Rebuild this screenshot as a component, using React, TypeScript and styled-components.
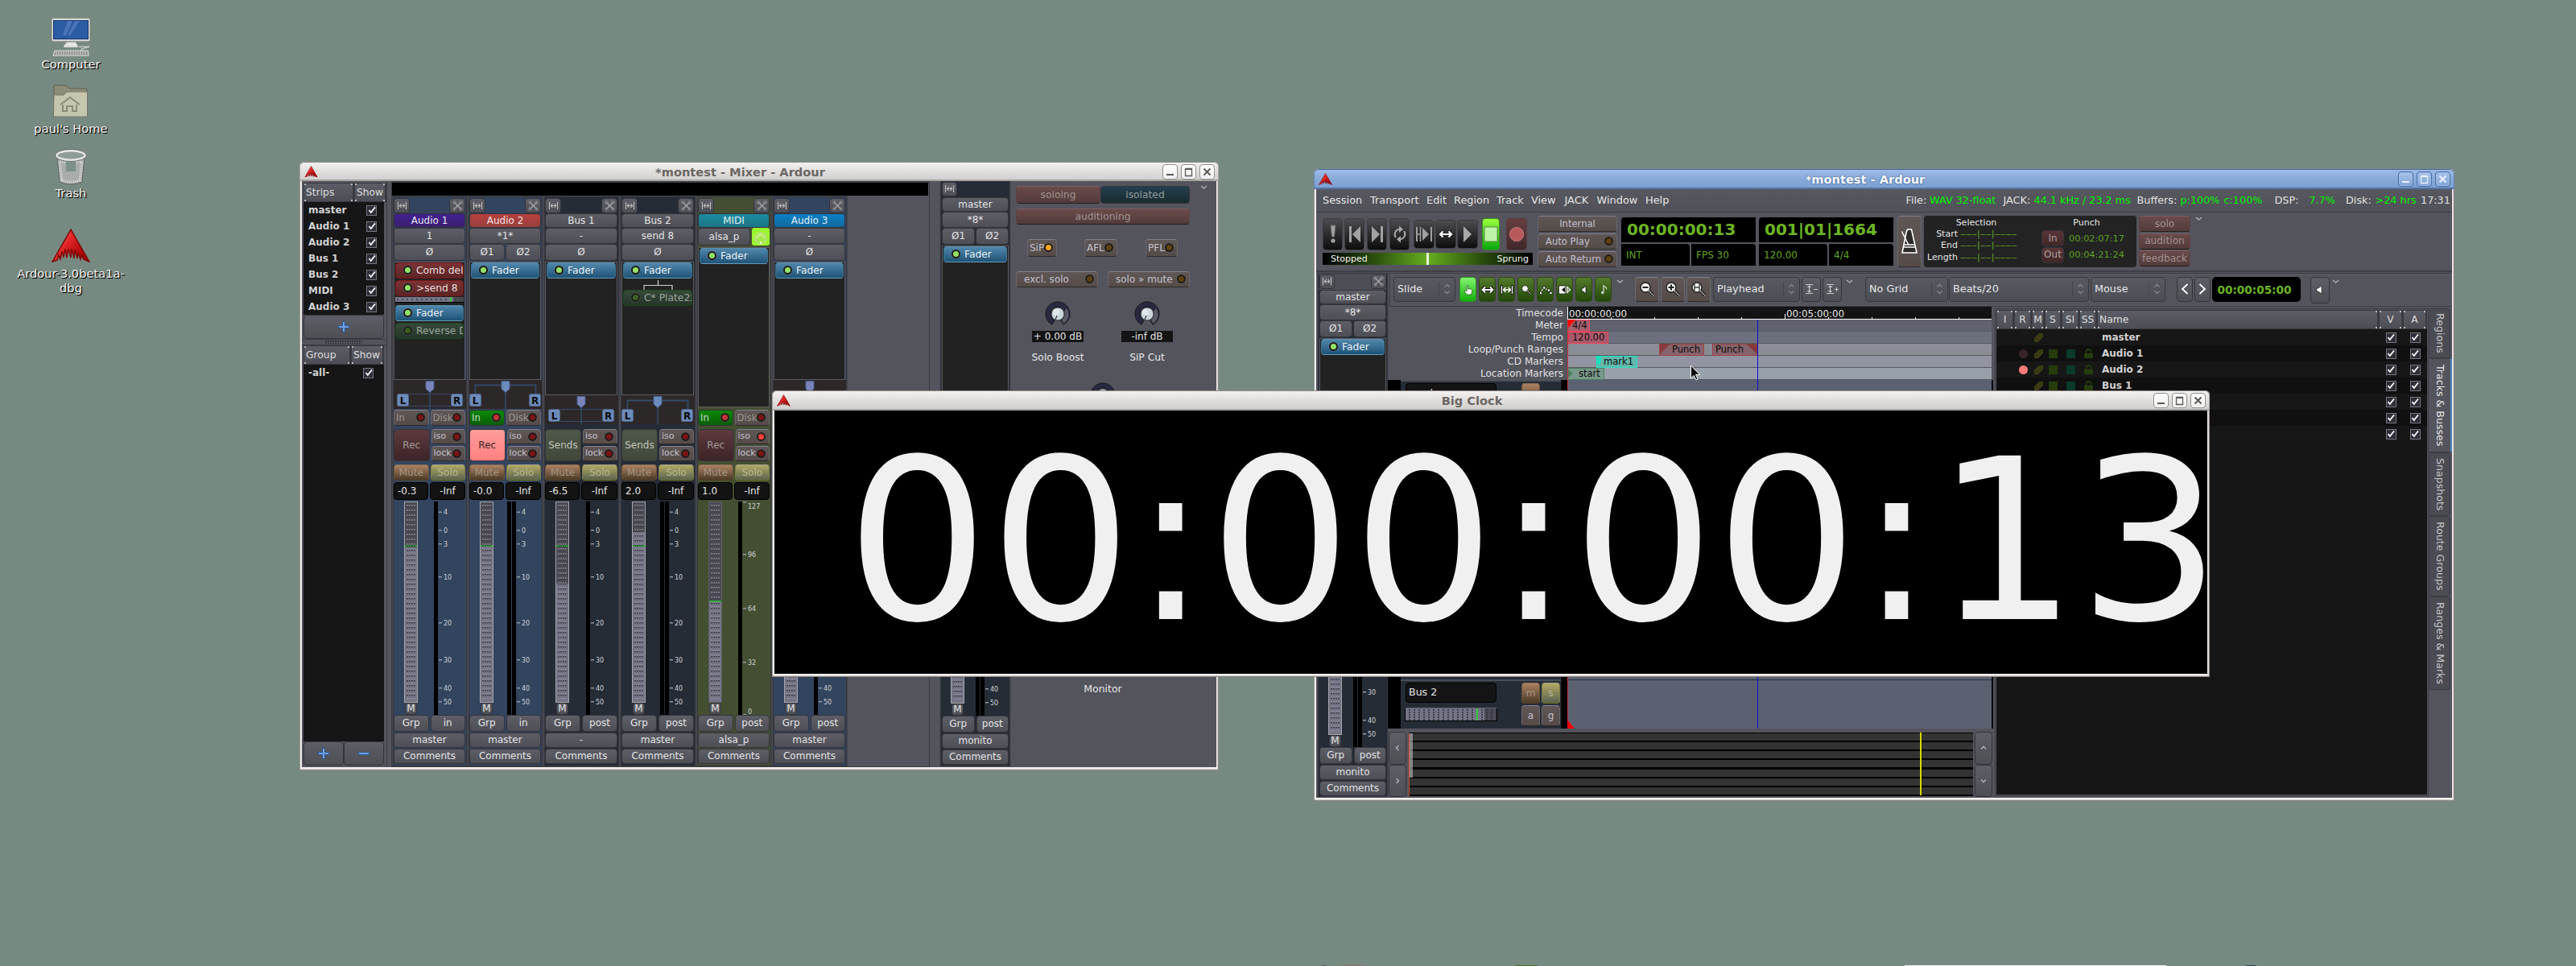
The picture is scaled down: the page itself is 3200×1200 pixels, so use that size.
import React from "react";
import styled, { createGlobalStyle, css } from "styled-components";

const GlobalStyle = createGlobalStyle`
  * { box-sizing: border-box; }
  html, body { margin: 0; padding: 0; overflow: hidden; }
  body { font-family: "DejaVu Sans", Verdana, sans-serif; font-size: 12px; color: #e6e6e6; }
`;

/* ---------- desktop ---------- */
const Desktop = styled.div`
  position: relative; width: 3200px; height: 1200px; background: #778a82; overflow: hidden;
`;
const DesktopItem = styled.div<{ $top: number }>`
  position: absolute; left: 3px; top: ${(p) => p.$top}px; width: 170px;
  display: flex; flex-direction: column; align-items: center; text-align: center;
  font-size: 14.67px; line-height: 18px; color: #f2f2f2; text-shadow: 1px 1px 0 #000, 1px 1px 1px #222;
`;
const IconSlot = styled.div<{ $h: number }>`height: ${(p) => p.$h}px; display: flex; align-items: flex-start; justify-content: center; margin-bottom: 1px;`;
const TaskEdge = styled.div`position: absolute; left: 1590px; bottom: 0; width: 1230px; height: 1px; display: flex;`;
const EdgeBit = styled.span<{ $w: number; $c: string }>`width: ${(p) => p.$w}px; background: ${(p) => p.$c};`;

/* ---------- window frame ---------- */
const Win = styled.section<{ $x: number; $y: number; $w: number; $h: number }>`
  position: absolute; left: ${(p) => p.$x}px; top: ${(p) => p.$y}px; width: ${(p) => p.$w}px; height: ${(p) => p.$h}px;
  isolation: isolate;
  display: flex; flex-direction: column; padding: 0 3px 4px; background: #f2f0ee; border-radius: 6px 6px 0 0;
  box-shadow: inset -1px -1px 0 #8d8682, inset 1px 0 0 #9c9693, inset -2px -2px 0 #d6d1ce; overflow: hidden;
`;
const TitleBar = styled.header<{ $h: number; $active?: boolean }>`
  flex: none; height: ${(p) => p.$h}px; margin: 0 -3px; padding: 1px 4px 0 5px; display: flex; align-items: center;
  border-radius: 6px 6px 0 0; border: 1px solid; border-bottom-width: 2px;
  font-size: 14.6px; font-weight: bold;
  ${(p) => p.$active
    ? css`background: linear-gradient(#9fbce8, #89aad9 50%, #7ba0d2); border-color: #48699b #5f83b8 #5474a5; color: #fff; text-shadow: 0 0 2px #35588c, 0 0 1px #35588c;`
    : css`background: linear-gradient(#f2f1f0, #e2e0df 50%, #d2d0cf); border-color: #928a87 #aaa5a2 #a6a3a1; color: #6a6764;`}
`;
const TitleText = styled.div`flex: 1; text-align: center; white-space: nowrap;`;
const WinButtons = styled.div`display: flex; gap: 4px;`;
const WinButton = styled.span<{ $active?: boolean }>`
  width: 19px; height: 19px; border-radius: 4px; display: flex; align-items: center; justify-content: center;
  border: 1px solid ${(p) => (p.$active ? "#46699e" : "#8f8b88")};
  background: ${(p) => (p.$active ? "linear-gradient(#a9c4ea,#7fa3d6)" : "linear-gradient(#fff,#eeedec)")};
  box-shadow: inset 0 0 0 1px ${(p) => (p.$active ? "#a4c0e8" : "#fff")};
`;
const Content = styled.div`flex: 1; min-height: 0; background: #54545d; display: flex; overflow: hidden;`;

const ArdourGlyph = ({ size = 17 }: { size?: number }) => (
  <svg width={size} height={size * 0.88} viewBox="0 0 48 42">
    <defs><linearGradient id="ard" x1="0" y1="0" x2="1" y2="0.6"><stop offset="0" stopColor="#ff7070" /><stop offset=".5" stopColor="#e02525" /><stop offset="1" stopColor="#a00000" /></linearGradient></defs>
    <path d="M24 1 L47 41 L40 38 L37 33 L36 38 L33 30 L32 37 L29 26 L28 37 L25 25 L24 36 L21 25 L19 36 L17 25 L15 36 L13 28 L11 38 L9 33 L7 39 L1 41 Z" fill="url(#ard)" stroke="#7c0505" strokeWidth="1.4" />
  </svg>
);

const SysButtons = ({ active }: { active?: boolean }) => {
  const c = active ? "#e9f1fd" : "#5c5a58";
  return (
    <WinButtons>
      <WinButton $active={active}><svg width="13" height="13"><rect x="2" y="9" width="9" height="2" fill={c} /></svg></WinButton>
      <WinButton $active={active}><svg width="13" height="13"><path d="M2.5 2v9.5h8V2.5h-8M2 3.3h9" fill="none" stroke={c} strokeWidth="1.3" /></svg></WinButton>
      <WinButton $active={active}><svg width="13" height="13"><path d="M2.5 2.5l8 8M10.5 2.5l-8 8" stroke={c} strokeWidth="2" /></svg></WinButton>
    </WinButtons>
  );
};
const Frame = ({ x, y, w, h, th, title, active, children }: { x: number; y: number; w: number; h: number; th: number; title: string; active?: boolean; children: React.ReactNode }) => (
  <Win $x={x} $y={y} $w={w} $h={h}>
    <TitleBar $h={th} $active={active}><ArdourGlyph /><TitleText>{title}</TitleText><SysButtons active={active} /></TitleBar>
    {children}
  </Win>
);

/* ---------- controls ---------- */
const tones = {
  plain: ["#5e5e67", "#4e4e55", "#e4e4e4"],
  led: ["#5f5755", "#554c49", "#c4c1d0"],
  ledDim: ["#5f5755", "#554c49", "#9a9693"],
  inOn: ["#0a8a06", "#0a5c08", "#c8d8c8"],
  recOff: ["#5d3a3e", "#3c2427", "#a39896"],
  recOn: ["#ff9d9d", "#ff8080", "#3a2626"],
  sends: ["#4f5848", "#41483a", "#c3c6bd"],
  mute: ["#ab8162", "#4b3a27", "#a29585"],
  solo: ["#b0a964", "#59624f", "#bab894"],
  warn: ["#6b4a4b", "#523b3b", "#9d9391"],
  iso: ["#22404d", "#1b2a30", "#90999c"],
  purple: ["#41208e", "#392070", "#e8e4f4"],
  red: ["#b5403f", "#98403f", "#f3e4e4"],
  teal: ["#1c8ba0", "#1d7486", "#e0f0f2"],
  azure: ["#0d7fc4", "#12699f", "#e2f0f8"],
  punch: ["#5a3537", "#402629", "#aaa09e"],
} as const;
type Tone = keyof typeof tones;
const Btn = styled.div<{ $tone?: Tone; $w?: number; $h?: number; $fs?: number; $left?: number; $ml?: number }>`
  ${(p) => (p.$w ? `width:${p.$w}px; flex:none;` : "flex:1; min-width:0;")}
  height: ${(p) => p.$h ?? 20}px; margin-left: ${(p) => p.$ml ?? 0}px;
  display: flex; align-items: center; justify-content: ${(p) => (p.$left !== undefined ? "space-between" : "center")};
  padding: 0 ${(p) => (p.$left !== undefined ? 4 : 0)}px 1px ${(p) => p.$left ?? 0}px;
  border: 1px solid #34353b; border-radius: 4px; white-space: nowrap; overflow: hidden;
  font-size: ${(p) => p.$fs ?? 12}px; line-height: 14px;
  background: linear-gradient(${(p) => tones[p.$tone ?? "plain"][0]}, ${(p) => tones[p.$tone ?? "plain"][1]});
  color: ${(p) => tones[p.$tone ?? "plain"][2]};
  ${(p) => (p.$tone === "led" || p.$tone === "ledDim") && "border-color:#837f92 #6b666c #2c2828;"}
  ${(p) => p.$tone === "mute" && "border-color:#8d7259 #6b5339 #5a3f20;"}
  ${(p) => p.$tone === "solo" && "border-color:#a9a78b #7d7d45 #6c7018;"}
  ${(p) => p.$tone === "warn" && "border-color:#7c5d61 #5b4244 #241b1b;"}
`;
const ledColors = { red: "#7a1414", redOn: "#ff4038", redIn: "#c23434", green: "#93e268", greenOff: "#3a5f22", amber: "#5f410c", amberOn: "#ffa51c" };
const Led = styled.i<{ $c: keyof typeof ledColors }>`
  flex: none; width: 11px; height: 11px; border-radius: 50%; border: 2.5px solid #1d1c1c; background: ${(p) => ledColors[p.$c]};
  box-shadow: 0 0 1px #888;
`;
const ChevronBox = styled.svg<{ $ml: number; $mt?: number }>`flex: none; margin-left: ${(p) => p.$ml}px; margin-top: ${(p) => p.$mt ?? 3}px;`;
const Chevron = ({ ml, mt }: { ml: number; mt?: number }) => (
  <ChevronBox $ml={ml} $mt={mt} width="9" height="6"><path d="M1 1l3.5 3L8 1" fill="none" stroke="#a9abb0" strokeWidth="1.6" /></ChevronBox>
);
const Row = styled.div<{ $h?: number; $gap?: number; $mt?: number; $ml?: number }>`
  display: flex; gap: ${(p) => p.$gap ?? 0}px; ${(p) => p.$h && `height:${p.$h}px;`} flex: none;
  margin-top: ${(p) => p.$mt ?? 0}px; margin-left: ${(p) => p.$ml ?? 0}px;
`;
const Col = styled.div<{ $w?: number; $gap?: number; $mt?: number; $ml?: number }>`
  display: flex; flex-direction: column; gap: ${(p) => p.$gap ?? 0}px; ${(p) => (p.$w ? `width:${p.$w}px; flex:none;` : "flex:1;")}
  margin-top: ${(p) => p.$mt ?? 0}px; margin-left: ${(p) => p.$ml ?? 0}px; min-height: 0;
`;

/* ---------- lists ---------- */
const CheckBox = styled.span`
  width: 13px; height: 13px; flex: none; border: 1px solid #77777f; background: #2e2e38; display: flex; align-items: center; justify-content: center;
`;
const Check = () => <CheckBox><svg width="10" height="10"><path d="M1.5 5l2.3 3L9 1.3" fill="none" stroke="#f0f0f0" strokeWidth="1.9" /></svg></CheckBox>;
const headDot = "radial-gradient(circle at 1px 1px, #b9b9b9 1px, transparent 1.3px)";
const HeadCell = styled.div<{ $w?: number; $center?: boolean }>`
  ${(p) => (p.$w ? `width:${p.$w}px; flex:none;` : "flex:1;")} height: 100%; display: flex; align-items: center; padding: 0 2px 1px;
  justify-content: ${(p) => (p.$center ? "center" : "flex-start")};
  background: ${headDot} 100% 0 / 2px 2px no-repeat, ${headDot} 100% 100% / 2px 2px no-repeat, ${headDot} 0 0 / 2px 2px no-repeat, ${headDot} 0 100% / 2px 2px no-repeat, linear-gradient(#5c5c66, #4d4e55);
  border: 1px solid #393a40; border-right-width: 2px; font-size: 12.3px; color: #dedede;
`;
const StripRow = styled.div<{ $pr: number }>`
  height: 20px; flex: none; display: flex; align-items: center; justify-content: space-between; padding: 0 ${(p) => p.$pr}px 0 6px;
  font-weight: bold; color: #d2d2d2; font-size: 12px;
`;
const Dark = styled.div<{ $h?: number }>`
  ${(p) => (p.$h ? `height:${p.$h}px; flex:none;` : "flex:1;")} background: #161616; display: flex; flex-direction: column;
`;
const SidePane = styled.div`width: 106px; flex: none; padding: 2px 3px 2px 2px; display: flex; flex-direction: column; border-right: 1px solid #3b3c42;`;
const GripRow = styled.div`
  height: 8px; flex: none; display: flex; align-items: center; justify-content: center; margin: 0 -2px; border-top: 1px solid #3b3c42; border-bottom: 1px solid #3b3c42;
  &::after { content: ""; width: 46px; height: 4px; background: radial-gradient(circle at 1px 1px, #33343a 0.8px, transparent 1px) 0 0 / 3px 3px; }
`;
const Plus = ({ minus }: { minus?: boolean }) => (
  <svg width="16" height="16"><path d={minus ? "M1.5 6.5h13v3h-13z" : "M6.5 1.5h3v5h5v3h-5v5h-3v-5h-5v-3h5z"} fill="#6f9fe0" stroke="#2c5590" strokeWidth="1" /></svg>
);

/* ---------- channel strip ---------- */
const StripBox = styled.div<{ $w: number; $bg: string; $mr?: number }>`
  width: ${(p) => p.$w}px; flex: none; background: ${(p) => p.$bg}; border: 1px solid #36373d; display: flex; flex-direction: column;
  padding: 0 1px 2px 0; margin-right: ${(p) => p.$mr ?? 2}px; outline: 1px solid #46474e;
`;
const Upper = styled.div<{ $h: number; $pb: number }>`height: ${(p) => p.$h}px; flex: none; padding-bottom: ${(p) => p.$pb}px; display: flex; flex-direction: column;`;
const TopRow = styled.div`height: 20px; flex: none; display: flex; justify-content: space-between; padding-top: 1px; > * { flex: none; }`;
const Plugins = styled.div`
  flex: 1; min-height: 0; margin-top: 1px; background: #222; border: 1px solid #5a5a61; display: flex; flex-direction: column; padding: 0 1px; overflow: hidden;
`;
const Proc = styled.div<{ $k: "fader" | "pre" | "post" }>`
  height: 20px; flex: none; border-radius: 4px; display: flex; align-items: center; gap: 5px; padding: 0 0 1px 9px; margin-bottom: 2px; white-space: nowrap; overflow: hidden;
  border: 1px solid; font-size: 12.3px;
  ${(p) => p.$k === "fader" && css`background: linear-gradient(#5187aa, #1e5377); border-color: #5b8fae #3a7296 #6899b5; color: #e8eef2;`}
  ${(p) => p.$k === "pre" && css`background: linear-gradient(#7c3234, #5a2526); border-color: #7c1414; color: #e6dede;`}
  ${(p) => p.$k === "post" && css`background: linear-gradient(#36493a, #25352a); border-color: #1d4a1d; color: #9da59b;`}
`;
const SendSlider = styled.div`
  height: 7px; flex: none; margin: -1px 0 3px; border-bottom: 1px solid #000;
  background: linear-gradient(90deg, transparent 68px, #30c840 68px, #30c840 70px, transparent 70px),
    radial-gradient(circle at 3px 3px, #44444e 1px, transparent 1.2px) 0 0 / 6px 7px, linear-gradient(90deg, #77778a 72px, #4a4a52 72px);
`;
const PanWrap = styled.div`height: 36px; flex: none; background: #2d2828; margin: 0 -1px 0 0; display: flex;`;
const Panner = ({ stereo }: { stereo?: boolean }) => {
  const l = stereo ? 0 : 4, r = stereo ? 74 : 71;
  return (
    <PanWrap>
      <svg width="90" height="36">
        <path d="M45 14V36" stroke="#35496a" strokeWidth="1.5" />
        {stereo ? <path d="M7.5 18V6.5H82.5V18" fill="none" stroke="#35496a" strokeWidth="1.8" /> : <path d="M19 17.5H71M19 32.5H71" stroke="#35496a" strokeWidth="1.2" />}
        {[l, r].map((x, i) => (
          <g key={i}><rect x={x + 0.5} y="17.5" width="14" height="15" rx="2" fill="#6d8ab8" stroke="#4a678f" />
            <text x={x + 7.5} y="30" textAnchor="middle" fontSize="12" fontWeight="bold" fill="#0a0a0a">{i ? "R" : "L"}</text></g>
        ))}
        <path d="M40 1.5H50V11L45 15.5L40 11Z" fill={stereo ? "#6b8cbd" : "#7a84b8"} stroke="#44618f" strokeWidth="1" />
      </svg>
    </PanWrap>
  );
};
const Gain = styled.div<{ $w?: number; $center?: boolean }>`
  ${(p) => (p.$w ? `width:${p.$w}px;` : "flex:1;")} height: 22px; background: #131313; border: 1px solid #000; border-radius: 4px; font-size: 12px; display: flex; align-items: center;
  padding: 0 0 1px ${(p) => (p.$center ? 0 : 4)}px; justify-content: ${(p) => (p.$center ? "center" : "flex-start")};
`;
const Fader = styled.div<{ $fill: number; $line: number; $edge: string }>`
  width: 17px; height: 250px; flex: none; border: 1px solid ${(p) => p.$edge};
  background:
    linear-gradient(transparent ${(p) => p.$line - 2}px, #22b02a ${(p) => p.$line - 2}px, #22b02a ${(p) => p.$line}px, transparent ${(p) => p.$line}px),
    linear-gradient(#4c4b54 ${(p) => p.$fill}px, #767586 ${(p) => p.$fill}px);
  &::after { content: ""; display: block; margin: 3px 0 0 2px; width: 12px; height: 242px;
    background: radial-gradient(circle at 1px 1px, rgba(160,160,176,.55) .7px, transparent 1px) 0 0 / 3px 6px, radial-gradient(circle at 1px 1px, #3b3b44 .7px, transparent 1px) 0 1.4px / 3px 6px; }
`;
const FaderArea = styled.div<{ $pl: number }>`height: 265px; flex: none; display: flex; padding-left: ${(p) => p.$pl}px;`;
const FaderCol = styled.div`width: 17px; display: flex; flex-direction: column; align-items: center;`;
const Meter = styled.div<{ $ml: number }>`width: 5px; flex: none; background: #000; margin-left: ${(p) => p.$ml}px;`;
const dbTicks: [number, string][] = [[13, "4"], [35.5, "0"], [52.5, "3"], [93.5, "10"], [150.5, "20"], [196.5, "30"], [231.5, "40"], [248.5, "50"]];
const midiTicks: [number, string][] = [[5.5, "127"], [65.5, "96"], [132.5, "64"], [199.5, "32"], [260.5, "0"]];
const Scale = ({ midi }: { midi?: boolean }) => (
  <svg width="32" height="265">
    {(midi ? midiTicks : dbTicks).map(([y, t]) => (
      <g key={t}>
        <rect x="1" y={midi && t === "127" ? 0 : midi && t === "0" ? 264 : y - 0.5} width="4" height="1.4" fill="#9ba0a8" />
        <text x="7" y={y + 3} fontSize="8" fill="#cfd2d6">{t}</text>
      </g>
    ))}
  </svg>
);
const WidthIcon = () => <svg width="13" height="11"><path d="M1.5 1v9M11.5 1v9M3.3 5.5h6.4M5.5 3L3.3 5.5l2.2 2.5M7.5 3l2.2 2.5-2.2 2.5" fill="none" stroke="#c2c2c2" strokeWidth="1.1" /></svg>;
const CloseIcon = () => <svg width="13" height="13"><path d="M2 2l9 9M11 2l-9 9" stroke="#a9a9ab" strokeWidth="1.4" /><path d="M1 1h3v3H1zM9 1h3v3H9zM1 9h3v3H1zM9 9h3v3H9z" fill="none" stroke="#85858b" strokeWidth=".9" /></svg>;
const MidiIcon = () => <svg width="18" height="18"><circle cx="9" cy="9" r="7" fill="#a4e84a" stroke="#c9d8a0" strokeWidth="1.2" /><g fill="#e8f4d0"><circle cx="5" cy="8" r="1" /><circle cx="6.5" cy="5.5" r="1" /><circle cx="9" cy="4.6" r="1" /><circle cx="11.5" cy="5.5" r="1" /><circle cx="13" cy="8" r="1" /><rect x="8" y="13" width="2" height="3" /></g></svg>;

type ProcDef = { k: "fader" | "pre" | "post"; t: string; slider?: boolean; route?: boolean };
type StripDef = {
  name: string; tone: Tone; w: number; mr: number; bg: string; kind: "audio" | "bus" | "midi"; input: string; stereo?: boolean; procs: ProcDef[]; recOn?: boolean; inOn?: boolean; isoOn?: boolean;
  gain: string; fill: number; line: number; meterGap: number; meters: number; point: string; out: string;
};
const F: ProcDef = { k: "fader", t: "Fader" };
const blue = "#33445f", bus = "#262c36", olive = "#444f32";
const strips: StripDef[] = [
  { name: "Audio 1", tone: "purple", w: 92, mr: 2, bg: blue, kind: "audio", input: "1", procs: [{ k: "pre", t: "Comb delay" }, { k: "pre", t: ">send 8", slider: true }, F, { k: "post", t: "Reverse Delay" }], gain: "-0.3", fill: 56, line: 55, meterGap: 20, meters: 1, point: "in", out: "master" },
  { name: "Audio 2", tone: "red", w: 92, mr: 2, bg: blue, kind: "audio", input: "*1*", stereo: true, procs: [F], recOn: true, inOn: true, gain: "-0.0", fill: 54, line: 55, meterGap: 17, meters: 2, point: "in", out: "master" },
  { name: "Bus 1", tone: "plain", w: 93, mr: 2, bg: bus, kind: "bus", input: "-", procs: [F], gain: "-6.5", fill: 101, line: 55, meterGap: 21, meters: 1, point: "post", out: "-" },
  { name: "Bus 2", tone: "plain", w: 93, mr: 2, bg: bus, kind: "bus", input: "send 8", stereo: true, procs: [{ ...F, route: true }, { k: "post", t: "C* Plate2x2" }], gain: "2.0", fill: 37, line: 55, meterGap: 18, meters: 2, point: "post", out: "master" },
  { name: "MIDI", tone: "teal", w: 92, mr: 2, bg: olive, kind: "midi", input: "alsa_p", procs: [F], inOn: true, isoOn: true, gain: "1.0", fill: 124, line: 124, meterGap: 20, meters: 1, point: "post", out: "alsa_p" },
  { name: "Audio 3", tone: "azure", w: 92, mr: 2, bg: blue, kind: "audio", input: "-", procs: [F], gain: "-0.0", fill: 54, line: 55, meterGap: 20, meters: 1, point: "post", out: "master" },
];
const Processors = ({ procs }: { procs: ProcDef[] }) => (
  <Plugins>
    {procs.map((p) => (
      <React.Fragment key={p.t}>
        <Proc $k={p.k}><Led $c={p.k === "post" ? "greenOff" : "green"} />{p.t}</Proc>
        {p.slider && <SendSlider />}
        {p.route && <svg width="86" height="12"><path d="M43.5 0V6M26 12V6.5H61V12" fill="none" stroke="#d0d0d0" strokeWidth="1.2" /></svg>}
      </React.Fragment>
    ))}
  </Plugins>
);
const PhaseRow = ({ two }: { two?: boolean }) => (
  <Row $h={21} $gap={1}>{two ? <><Btn $h={21}>Ø1</Btn><Btn $h={21}>Ø2</Btn></> : <Btn $h={21}>Ø</Btn>}</Row>
);
const Footer = ({ point, out }: { point: string; out: string }) => (
  <>
    <Row $gap={2}><Btn $h={21}>Grp</Btn><Btn $h={21}>{point}</Btn></Row>
    <Row $mt={1}><Btn $h={19}>{out}</Btn></Row>
    <Row $mt={1}><Btn $h={19}>Comments</Btn></Row>
  </>
);
const MidiCell = styled.div`width: 22px; height: 22px; background: #99f52e; border-radius: 3px; display: flex; align-items: center; justify-content: center; padding-top: 3px;`;
const ChannelStrip = ({ s }: { s: StripDef }) => (
  <StripBox $w={s.w} $bg={s.bg} $mr={s.mr}>
    <Upper $h={s.kind === "bus" ? 288 : 264} $pb={s.kind === "bus" ? 6 : s.kind === "midi" ? 3 : 1}>
      <TopRow><Btn $w={20} $h={19}><WidthIcon /></Btn><Btn $w={20} $h={19}><CloseIcon /></Btn></TopRow>
      <Row $h={18}><Btn $h={18} $tone={s.tone}>{s.name}</Btn></Row>
      {s.kind === "midi" ? (
        <Row $h={23} $gap={2}><Btn $h={22}>{s.input}</Btn><MidiCell><MidiIcon /></MidiCell></Row>
      ) : (
        <><Row $h={20}><Btn $h={20}>{s.input}</Btn></Row><PhaseRow two={s.name === "Audio 2"} /></>
      )}
      <Processors procs={s.procs} />
      {s.kind !== "midi" && <Panner stereo={s.stereo} />}
    </Upper>
    {s.kind !== "bus" && (
      <Row $gap={2}>
        <Btn $tone={s.inOn ? "inOn" : "ledDim"} $left={2} $fs={11.6}>In<Led $c={s.inOn ? "redIn" : "red"} /></Btn>
        <Btn $tone="ledDim" $left={2} $fs={11.6}>Disk<Led $c="red" /></Btn>
      </Row>
    )}
    <Row $mt={s.kind === "bus" ? 0 : 4} $gap={2} $h={40}>
      <Btn $h={40} $tone={s.kind === "bus" ? "sends" : s.recOn ? "recOn" : "recOff"}>{s.kind === "bus" ? "Sends" : "Rec"}</Btn>
      <Col $gap={2}>
        <Row><Btn $h={19} $tone="led" $left={2} $fs={11}>iso<Led $c={s.isoOn ? "redOn" : "red"} /></Btn></Row>
        <Row><Btn $h={19} $tone="led" $left={2} $fs={11}>lock<Led $c="red" /></Btn></Row>
      </Col>
    </Row>
    <Row $mt={4} $gap={2}><Btn $tone="mute">Mute</Btn><Btn $tone="solo">Solo</Btn></Row>
    <Row $mt={2} $gap={2}><Gain $w={43}>{s.gain}</Gain><Gain $center>-Inf</Gain></Row>
    <Row $mt={2}>
      <FaderArea $pl={13}>
        <FaderCol><Fader $fill={s.fill} $line={s.line} $edge={s.kind === "midi" ? "#5c5c66" : "#a5a5aa"} /><Btn $w={15} $h={15}>M</Btn></FaderCol>
        <Meter $ml={s.meterGap} />{s.meters === 2 && <Meter $ml={1} />}
        <Scale midi={s.kind === "midi"} />
      </FaderArea>
    </Row>
    <Footer point={s.point} out={s.out} />
  </StripBox>
);

const MasterBox = styled.div<{ $bg: string; $pb: number }>`
  width: 87px; flex: none; display: flex; flex-direction: column; padding: 0 1px ${(p) => p.$pb}px; background: ${(p) => p.$bg}; border: 1px solid #393a40; outline: 1px solid #4c4d54;
`;
const Filler = styled.div`flex: 1;`;
const TopTint = styled.div<{ $c: string }>`background: ${(p) => p.$c};`;
const MasterStrip = ({ close }: { close?: boolean }) => (
  <MasterBox $bg={bus} $pb={close ? 0 : 1}>
    <Upper $h={270} $pb={0}>
      <TopTint $c={close ? "#4d4e56" : bus}><TopRow><Btn $w={19} $h={18}><WidthIcon /></Btn>{close && <Btn $w={19} $h={18}><CloseIcon /></Btn>}</TopRow></TopTint>
      <Row $h={18}><Btn $h={18}>master</Btn></Row>
      <Row $h={20}><Btn $h={20}>*8*</Btn></Row>
      <PhaseRow two />
      <Processors procs={[F]} />
    </Upper>
    <Filler />
    <FaderArea $pl={11}>
      <FaderCol><Fader $fill={54} $line={55} $edge="#a5a5aa" /><Btn $w={15} $h={15}>M</Btn></FaderCol>
      <Meter $ml={14} /><Meter $ml={1} /><Scale />
    </FaderArea>
    <Footer point="post" out="monito" />
  </MasterBox>
);

/* ---------- mixer window ---------- */
const StripScroll = styled.div`width: 669px; flex: none; margin-left: 5px; border: 1px solid #3b3c42; border-top-width: 2px; display: flex; flex-direction: column; overflow: hidden; padding-right: 1px;`;
const BlackBar = styled.div`height: 16px; flex: none; background: #000;`;
const StripRowBox = styled.div`flex: 1; display: flex; padding: 1px 0 1px 1px;`;
const MasterSlot = styled.div`width: 90px; flex: none; margin: -1px 0 0 12px; display: flex; padding: 0 1px 1px;`;
const Monitor = styled.div`flex: 1; display: flex; padding: 6px 0 0 5px;`;
const MonitorCol = styled.div`width: 216px; flex: none; display: flex; flex-direction: column;`;
const KnobCell = styled.div<{ $ml?: number }>`width: 64px; margin-left: ${(p) => p.$ml ?? 0}px; display: flex; flex-direction: column; align-items: center; white-space: nowrap; font-size: 12.3px;`;
const Value = styled.div`width: 64px; height: 14px; background: #141414; font-size: 12px; line-height: 14px; text-align: center; margin: 5px 0 12px;`;
const Knob = () => (
  <svg width="32" height="32" viewBox="-16 -16 32 32">
    <path d="M-7 13.2A15 15 0 1 1 7 13.2L4 8A9 9 0 1 0 -4 8Z" fill="#2a2942" stroke="#15151c" strokeWidth="1" />
    <path d="M11 -7A13 13 0 0 1 7 12L5 7A9 9 0 0 0 8 -3Z" fill="#5a5b66" />
    <circle r="8" fill="#c9d6da" stroke="#33333b" /><circle cx="-2" cy="-2" r="4" fill="#dfe8ea" />
    <path d="M-1 2L-3 7" stroke="#333" strokeWidth="1.2" />
  </svg>
);
const MonitorLabel = styled.div<{ $mt: number }>`margin-top: ${(p) => p.$mt}px; text-align: center; font-size: 12.5px; line-height: 15px;`;

const Mixer = () => (
  <Frame x={372} y={201} w={1142} h={756} th={24} title="*montest - Mixer - Ardour">
    <Content>
      <SidePane>
        <Row $h={24}><HeadCell $w={63}>Strips</HeadCell><HeadCell>Show</HeadCell></Row>
        <Dark $h={140}>{["master", "Audio 1", "Audio 2", "Bus 1", "Bus 2", "MIDI", "Audio 3"].map((n) => <StripRow key={n} $pr={9}>{n}<Check /></StripRow>)}</Dark>
        <Row><Btn $h={30}><Plus /></Btn></Row>
        <GripRow />
        <Row $h={24}><HeadCell $w={59}>Group</HeadCell><HeadCell>Show</HeadCell></Row>
        <Dark><StripRow $pr={13}>-all-<Check /></StripRow></Dark>
        <Row><Btn $h={30}><Plus /></Btn><Btn $h={30}><Plus minus /></Btn></Row>
      </SidePane>
      <StripScroll>
        <BlackBar />
        <StripRowBox>{strips.map((s) => <ChannelStrip key={s.name} s={s} />)}</StripRowBox>
      </StripScroll>
      <MasterSlot><MasterStrip /></MasterSlot>
      <Monitor>
        <MonitorCol>
          <Row><Btn $tone="warn" $w={105} $h={22} $fs={12.3}>soloing</Btn><Btn $tone="iso" $h={22} $fs={12.3}>isolated</Btn></Row>
          <Row $mt={6}><Btn $tone="warn" $fs={12.3}>auditioning</Btn></Row>
          <Row $mt={18} $ml={14}>
            <Btn $tone="led" $w={37} $h={22} $left={2}>SiP<Led $c="amberOn" /></Btn>
            <Btn $tone="led" $w={41} $h={22} $left={2} $ml={34}>AFL<Led $c="amber" /></Btn>
            <Btn $tone="led" $w={40} $h={22} $left={2} $ml={35}>PFL<Led $c="amber" /></Btn>
          </Row>
          <Row $mt={18}><Btn $tone="led" $w={102} $left={9}>excl. solo<Led $c="amber" /></Btn><Btn $tone="led" $w={102} $left={9} $ml={12}>solo » mute<Led $c="amber" /></Btn></Row>
          <Row $mt={17} $ml={20}>
            <KnobCell><Knob /><Value>+ 0.00 dB</Value>Solo Boost</KnobCell>
            <KnobCell $ml={47}><Knob /><Value>-inf dB</Value>SiP Cut</KnobCell>
          </Row>
          <Row $mt={24} $ml={92}><Knob /></Row>
          <MonitorLabel $mt={341}>Monitor</MonitorLabel>
        </MonitorCol>
        <Chevron ml={13} mt={-1} />
      </Monitor>
    </Content>
  </Frame>
);

/* ---------- editor window ---------- */
const EditorBody = styled.div`flex: 1; min-height: 0; display: flex; flex-direction: column;`;
const MenuBar = styled.div`height: 29px; flex: none; display: flex; align-items: center; padding: 0 0 2px 8px; font-size: 12.9px; border-bottom: 1px solid #3e3f45; white-space: nowrap; background: linear-gradient(#57575f, #515159);`;
const MenuItem = styled.span<{ $w: number }>`width: ${(p) => p.$w}px; flex: none;`;
const Stat = styled.span<{ $w: number; $g?: boolean }>`width: ${(p) => p.$w}px; flex: none; color: ${(p) => (p.$g ? "#00f400" : "#e2e2e2")}; font-size: 12.8px;`;
const TransportBar = styled.div`height: 74px; flex: none; display: flex; align-items: flex-start; padding-left: 8px; border-bottom: 2px solid #3e3f45;`;
const TBtn = styled.div<{ $w: number; $h: number; $ml?: number; $c?: "stop" | "rec" }>`
  width: ${(p) => p.$w}px; height: ${(p) => p.$h}px; margin-left: ${(p) => p.$ml ?? 3}px; border-radius: 4px; border: 1px solid #3c3c40; flex: none;
  display: flex; align-items: center; justify-content: center; background: linear-gradient(#4c4c51, #0d0d0d);
  ${(p) => p.$c === "stop" && "background: linear-gradient(#98ff3c, #08a80a); border-color:#3c8a20;"}
  ${(p) => p.$c === "rec" && "background: linear-gradient(#673f42, #3f282b); border-color:#5a3c3e;"}
`;
const Shuttle = styled.div`
  width: 261px; height: 15px; margin-top: 3px; display: flex; align-items: center; justify-content: space-between; padding: 0 5px 0 10px; font-size: 11px; color: #f4f4f4;
  background: linear-gradient(90deg, transparent 129px, #e8f4d8 129px, #e8f4d8 131.5px, transparent 131.5px), linear-gradient(90deg, #000, #2c500e 25%, #66ae20 50%, #2c500e 75%, #000);
`;
const ClockTop = styled.div`height: 31px; background: #000; border-radius: 4px 0 0 0; color: #6cb523; font-size: 20px; font-weight: bold; display: flex; align-items: center; padding: 0 0 1px 7px;`;
const ClockCell = styled.div<{ $w?: number }>`${(p) => (p.$w ? `width:${p.$w}px;` : "flex:1;")} height: 27px; background: #000; border-radius: 0 4px 0 0; color: #62a522; font-size: 12px; display: flex; align-items: center; padding-left: 6px;`;
const SelPanel = styled.div`width: 264px; height: 64px; flex: none; margin: 4px 0 0 3px; background: #232324; border-radius: 4px; display: flex; font-size: 11px; white-space: nowrap;`;
const SelTitle = styled.div<{ $w: number }>`width: ${(p) => p.$w}px; text-align: center; height: 16px; line-height: 16px; padding-top: 1px;`;
const SelRow = styled.div`height: 14.3px; line-height: 14.3px; display: flex;`;
const SelKey = styled.span`width: 42px; text-align: right; margin-right: 3px;`;
const Green = styled.span`color: #66ab24;`;
const PunchRow = styled.div`display: flex; align-items: center; gap: 6px; height: 20.5px; font-size: 11.3px; color: #5fa022;`;

const MainRow = styled.div`flex: 1; min-height: 0; display: flex; padding: 0 1px 0 1px;`;
const EditorStripCol = styled.div`width: 88px; flex: none; padding: 1px 0 1px 1px; display: flex;`;
const EditCol = styled.div`flex: 1; min-width: 0; display: flex; flex-direction: column;`;
const ToolRow = styled.div`height: 42px; flex: none; margin: 1px 0 0 2px; border: 1px solid #3a3b41; display: flex; align-items: flex-start; padding: 4px 0 0 4px; box-shadow: inset 0 0 0 1px #595a62;`;
const Combo = styled.div<{ $w: number; $ml?: number }>`
  width: ${(p) => p.$w}px; height: 31px; margin-left: ${(p) => p.$ml ?? 0}px; flex: none; display: flex; align-items: center; justify-content: space-between; padding: 0 6px 2px 4px;
  border: 1px solid #37383e; border-radius: 4px; background: linear-gradient(#595962, #4d4d55); font-size: 12.8px; white-space: nowrap;
`;
const ComboArrow = () => <svg width="14" height="18"><path d="M.5 0v18" stroke="#43444a" /><path d="M7.5 6.5L10.5 3.5l3 3M7.5 11.5l3 3 3-3" fill="none" stroke="#85868d" strokeWidth="1.3" /></svg>;
const ModeBtn = styled.div<{ $on?: boolean }>`
  width: 21px; height: 31px; border-radius: 4px; border: 1px solid ${(p) => (p.$on ? "#2a8f20" : "#2f4a16")}; display: flex; align-items: center; justify-content: center;
  background: ${(p) => (p.$on ? "linear-gradient(#84f56f, #14ad0c)" : "linear-gradient(#547a2c, #22490a)")};
`;
const NudgeClock = styled.div`width: 110px; height: 31px; margin-left: 2px; background: #000; border-radius: 5px; color: #6cb523; font-weight: bold; font-size: 13.6px; display: flex; align-items: center; justify-content: center; padding-right: 5px;`;
const arrowPath = "M2 9h12M5 5.5L1.5 9 5 12.5M11 5.5L14.5 9 11 12.5";
const curvePath = "M1 13L6 6.500L12 10L15 13";
const modeIcons = [
  <path d="M6 4q1-1 1.700 0V8h4l1 1v3l-1.500 3H6.500L3 11q0-1.500 1.500-1L6 11z" fill="#fff" stroke="#1c5a14" strokeWidth=".8" />,
  <><path d={arrowPath} stroke="#111" strokeWidth="4" fill="none" /><path d={arrowPath} stroke="#fff" strokeWidth="1.800" fill="none" /></>,
  <><path d="M1.500 3v12M14.500 3v12" stroke="#111" strokeWidth="3" /><path d="M1.500 4v10M14.500 4v10M4 9h8M6.500 6L3.500 9l3 3M9.500 6l3 3-3 3" stroke="#fff" strokeWidth="1.300" fill="none" /></>,
  <><circle cx="6.500" cy="7.500" r="3.800" fill="#fff" stroke="#222" strokeWidth=".8" /><path d="M9.500 10.500l4 4" stroke="#111" strokeWidth="3" /><path d="M9.500 10.500l4 4" stroke="#e8e8e8" strokeWidth="1.500" strokeDasharray="1.500 1" /></>,
  <><path d={curvePath} stroke="#fff" strokeWidth="1" fill="none" /><g fill="#fff" stroke="#111" strokeWidth=".7"><rect x=".5" y="11.500" width="3" height="3" /><rect x="4.800" y="5" width="3" height="3" /><rect x="10.500" y="8" width="3" height="3" /><rect x="13" y="11.500" width="3" height="3" /></g></>,
  <><rect x=".5" y="4" width="8.500" height="10" fill="#fff" stroke="#111" strokeWidth=".7" /><path d="M8 5.500v7L4 9z" fill="#111" /><path d="M10.500 5v8l4.500-4z" fill="#8fa080" stroke="#fff" /></>,
  <path d="M5 7h2l3-3v10l-3-3H5z" fill="#fff" stroke="#111" strokeWidth=".8" />,
  <><path d="M8 12V4l3.500 2.500v2" stroke="#d0d8c8" strokeWidth="1.300" fill="none" /><circle cx="6.800" cy="12.500" r="1.700" fill="#d0d8c8" /></>,
];
const ZoomIcon = ({ k }: { k: "-" | "+" | "f" }) => (
  <svg width="22" height="22"><circle cx="9" cy="9" r="6" fill="#f2f2f2" stroke="#222" strokeWidth="1.500" /><path d="M13 13l6 6" stroke="#222" strokeWidth="4" /><path d="M13 13l6 6" stroke="#d8d8d8" strokeWidth="1.800" strokeDasharray="1.500 1" />
    {k === "-" ? <path d="M5.500 9h7" stroke="#222" strokeWidth="2" /> : k === "+" ? <path d="M5.500 9h7M9 5.500v7" stroke="#222" strokeWidth="2" /> : <path d="M6 5v8M12 5v8M6 9h6" stroke="#444" strokeWidth="1.400" />}
  </svg>
);
const HeightIcon = ({ plus }: { plus?: boolean }) => <svg width="17" height="14"><path d="M1 1.500h9M1 12.500h9M5.500 3v8M3.500 5l2-2 2 2M3.500 9l2 2 2-2M11 7.500h5" fill="none" stroke="#c6c6c8" strokeWidth="1.100" />{plus && <path d="M13.500 5v5" stroke="#c6c6c8" />}</svg>;
const Speaker = () => <svg width="12" height="14"><path d="M2 5h2l4-3v10L4 9H2z" fill="#fff" stroke="#111" strokeWidth=".6" /></svg>;

const Lower = styled.div`flex: 1; min-height: 0; display: flex;`;
const CanvasCol = styled.div`width: 752px; flex: none; display: flex; flex-direction: column;`;
const RulerLabels = styled.div`width: 223px; flex: none; padding: 1px 5px 0 0; text-align: right; font-size: 12.1px; line-height: 15px; display: flex; flex-direction: column; color: #e0e0e0;`;
const Rulers = styled.div`width: 527px; flex: none; position: relative; display: flex; flex-direction: column;`;
const Ruler = styled.div<{ $c: string }>`height: 15px; background: ${(p) => p.$c}; border-bottom: 1px solid #555a60; position: relative;`;
const TimeRuler = styled.div`height: 16px; background: #141414; position: relative; font-size: 11.8px; line-height: 18px; border-bottom: 1px solid #fff;`;
const TimeLabel = styled.span<{ $x: number }>`position: absolute; left: ${(p) => p.$x}px; top: 0;`;
const Flag = styled.span<{ $x: number; $w: number; $fill: string; $edge: string; $pl: number }>`
  position: absolute; left: ${(p) => p.$x}px; top: 0; width: ${(p) => p.$w}px; height: 15px; background: ${(p) => p.$fill}; border: 1px solid ${(p) => p.$edge};
  color: #0c0c0c; font-size: 11.5px; line-height: 13px; padding-left: ${(p) => p.$pl}px; white-space: nowrap;
`;
const Overlay = styled.svg`position: absolute; left: 0; top: 0; pointer-events: none; z-index: 2;`;
const Tracks = styled.div`height: 433px; flex: none; display: flex; background: #000; position: relative;`;
const TrackHeads = styled.div`width: 200px; margin-left: 16px; flex: none; background: ${bus}; display: flex; flex-direction: column; justify-content: space-between; border-right: 1px solid #111;`;
const TrackHead = styled.div`height: 61px; display: flex; justify-content: space-between; padding: 2px 1px 0 6px; border-top: 2px solid #4b4f58;`;
const TrackName = styled.div`width: 113px; height: 25px; background: #141414; border: 1px solid #000; border-radius: 4px; font-size: 12.6px; line-height: 22px; padding-left: 3px;`;
const TrackFader = styled.div`
  width: 115px; height: 17px; margin: 6px 0 0 -1px; border: 1px solid #000; border-top-color: #5d5e68;
  background: linear-gradient(90deg, transparent 88px, #2fc83c 88px, #2fc83c 90px, transparent 90px),
    radial-gradient(circle at 5px 2px, rgba(40,40,50,.7) .7px, transparent 1px) 0 0 / 6px 3px, linear-gradient(90deg, #757486 98px, #4c4b55 98px);
`;
const TrackGrid = styled.div`display: grid; grid-template-columns: 23px 23px; gap: 2px; align-content: start;`;
const TrackCanvas = styled.div`width: 527px; margin-left: 7px; flex: none; background: #5b6171; display: flex; flex-direction: column; justify-content: flex-end;`;
const Lane = styled.div`height: 61px; border-top: 1px solid #2a3040;`;
const SummaryRow = styled.div`flex: 1; display: flex; padding-left: 1px;`;
const SmallArrow = ({ d }: { d: string }) => <svg width="10" height="10"><path d={d} fill="none" stroke="#a9abb0" strokeWidth="1.6" /></svg>;
const Summary = styled.div`
  width: 701px; height: 79px; margin: 1px 2px 0 3px; position: relative;
  background: repeating-linear-gradient(#000 0 1px, #333 1px 10px, #000 10px 11.15px);
`;
const SummaryView = styled.div`position: absolute; left: 0; top: 1px; width: 5px; height: 55px; background: rgba(190,190,190,.6); border-left: 1px solid #e05030;`;
const SummaryEnd = styled.div`position: absolute; left: 635px; top: 0; width: 2px; height: 78px; background: #d8d800;`;
const SummaryRed = styled.div`position: absolute; left: 0; top: 1px; width: 1px; height: 78px; background: #d04820;`;

const ListPane = styled.div`width: 539px; flex: none; margin: 2px 1px 2px 2px; border: 1px solid #3a3b41; padding: 1px; display: flex; flex-direction: column; overflow: hidden;`;
const RouteRow = styled.div<{ $alt: boolean }>`height: 20px; flex: none; display: flex; align-items: center; background: ${(p) => (p.$alt ? "#101010" : "#171717")}; font-weight: bold; color: #d2d2d2; font-size: 12px;`;
const Cell = styled.span<{ $w?: number; $left?: number }>`${(p) => (p.$w ? `width:${p.$w}px;` : "flex:1;")} display: flex; justify-content: ${(p) => (p.$left ? "flex-start" : "center")}; padding-left: ${(p) => p.$left ?? 0}px;`;
const Swatch = styled.i<{ $c: string }>`width: 11px; height: 11px; background: ${(p) => p.$c};`;
const RecDot = styled.i<{ $on?: boolean }>`width: 11px; height: 11px; border-radius: 50%; background: ${(p) => (p.$on ? "#ff7c7c" : "#3b2427")};`;
const Tabs = styled.div`width: 29px; flex: none; margin-top: 2px; display: flex; flex-direction: column;`;
const Tab = styled.div<{ $h: number; $on?: boolean }>`
  height: ${(p) => p.$h}px; flex: none; width: ${(p) => (p.$on ? 29 : 26)}px; writing-mode: vertical-rl; display: flex; align-items: center; justify-content: center; font-size: 12.6px;
  border: 1px solid #3c3d43; border-left: ${(p) => (p.$on ? "none" : "1px solid #3c3d43")}; border-radius: 0 4px 4px 0;
  background: ${(p) => (p.$on ? "#54545d" : "#4b4b52")}; color: ${(p) => (p.$on ? "#e8e8e8" : "#c9c9cb")};
  ${(p) => p.$on && "border-right: 3px solid #4e86c0;"}
`;

const routes: [string, number][] = [["master", 0], ["Audio 1", 1], ["Audio 2", 2], ["Bus 1", 3], ["Bus 2", 3], ["MIDI", 1], ["Audio 3", 1]];
const RouteList = () => (
  <ListPane>
    <Row $h={24}>
      <HeadCell $center $w={22}>I</HeadCell><HeadCell $center $w={22}>R</HeadCell><HeadCell $center $w={16}>M</HeadCell><HeadCell $center $w={21}>S</HeadCell>
      <HeadCell $center $w={22}>SI</HeadCell><HeadCell $center $w={22}>SS</HeadCell><HeadCell>Name</HeadCell><HeadCell $center $w={30}>V</HeadCell><HeadCell $center $w={30}>A</HeadCell>
    </Row>
    {routes.map(([n, k], i) => (
      <RouteRow key={n} $alt={i % 2 === 1}>
        <Cell $w={22} /><Cell $w={22}>{(k === 1 || k === 2) && <RecDot $on={k === 2} />}</Cell>
        <Cell $w={16}><svg width="11" height="11"><path d="M6 0h5v5l-6 6H0V6z" fill="#3c3a15" /></svg></Cell>
        <Cell $w={21}>{k > 0 && <Swatch $c="#263c0c" />}</Cell>
        <Cell $w={22}>{k > 0 && <Swatch $c="#0b3a2a" />}</Cell>
        <Cell $w={22}>{k > 0 && <svg width="11" height="12"><path d="M0 6h11v6H0z" fill="#263c0c" /><path d="M2.5 6V4a3 3 0 0 1 6 0v2" fill="none" stroke="#263c0c" strokeWidth="1.8" /></svg>}</Cell>
        <Cell $left={6}>{n}</Cell><Cell $w={30}><Check /></Cell><Cell $w={30}><Check /></Cell>
      </RouteRow>
    ))}
    <Dark />
  </ListPane>
);

const menus: [string, number][] = [["Session", 59], ["Transport", 70], ["Edit", 34], ["Region", 53], ["Track", 43], ["View", 41.5], ["JACK", 40], ["Window", 60.5], ["Help", 323.5]];

const Editor = () => (
  <Frame x={1632} y={210} w={1417} h={785} th={25} title="*montest - Ardour" active>
    <Content>
      <EditorBody>
        <MenuBar>
          {menus.map(([t, w]) => <MenuItem key={t} $w={w}>{t}</MenuItem>)}
          <Stat $w={29.5}>File:</Stat><Stat $w={91.5} $g>WAV 32-float</Stat><Stat $w={38}>JACK:</Stat><Stat $w={128} $g>44.1 kHz / 23.2 ms</Stat>
          <Stat $w={54}>Buffers:</Stat><Stat $w={54} $g>p:100%</Stat><Stat $w={63} $g>c:100%</Stat><Stat $w={43}>DSP:</Stat><Stat $w={45.5} $g>7.7%</Stat>
          <Stat $w={36.5}>Disk:</Stat><Stat $w={56.5} $g>&gt;24 hrs</Stat><Stat $w={38}>17:31</Stat>
        </MenuBar>
        <TransportBar>
          <Col $w={261} $mt={7}>
            <Row $h={40}>
              <TBtn $w={25} $h={40} $ml={0}><svg width="12" height="24"><path d="M3 1h6L7.5 15h-3z" fill="#a2a2a2" stroke="#6a6a6a" /><circle cx="6" cy="20" r="2.6" fill="#a2a2a2" /></svg></TBtn>
              <TBtn $w={25} $h={40} $ml={2}><svg width="16" height="22"><path d="M1 1h3v20H1zM15 1v20L5 11z" fill="#a2a2a2" /></svg></TBtn>
              <TBtn $w={25} $h={40}><svg width="16" height="22"><path d="M12 1h3v20h-3zM1 1v20l10-10z" fill="#a2a2a2" /></svg></TBtn>
              <TBtn $w={25} $h={40}><svg width="18" height="22"><path d="M4 15A6.3 6.3 0 0 1 9 4.8M14 7A6.3 6.3 0 0 1 9 17.200" fill="none" stroke="#a8a8a8" strokeWidth="2" /><path d="M8 .5l5 4.300L8 9zM10 13l-5 4.200L10 21.500z" fill="#a8a8a8" /></svg></TBtn>
              <Row $mt={2}>
                <TBtn $w={26} $h={36} $ml={5}><svg width="20" height="18"><path d="M0 0h2v18H0zM18 0H20v18h-2zM8 1v16l8-8z" fill="#a0a0a0" /><path d="M2 9h4M5.500 0v18" stroke="#a0a0a0" strokeWidth="1.500" /></svg></TBtn>
                <TBtn $w={26} $h={36} $ml={1}><svg width="18" height="10"><path d="M2 5h14M5.5 1.5L2 5l3.5 3.5M12.5 1.5L16 5l-3.5 3.5" stroke="#fff" strokeWidth="2" fill="none" /></svg></TBtn>
                <TBtn $w={26} $h={36} $ml={1}><svg width="12" height="20"><path d="M1 0l10 10L1 20z" fill="#a8a8a8" /></svg></TBtn>
              </Row>
              <TBtn $w={22} $h={40} $ml={5} $c="stop"><svg width="18" height="20"><rect x="1" y="1" width="16" height="18" fill="#bdf3a6" stroke="#5a8a48" /></svg></TBtn>
              <TBtn $w={26} $h={40} $ml={8} $c="rec"><svg width="20" height="20"><circle cx="10" cy="10" r="8.7" fill="#b85a5b" stroke="#d09090" strokeWidth=".6" /></svg></TBtn>
            </Row>
            <Shuttle><span>Stopped</span><span>Sprung</span></Shuttle>
          </Col>
          <Col $w={99} $mt={4} $ml={6} $gap={2}>
            <Row><Btn $tone="led" $fs={11.6}>Internal</Btn></Row>
            <Row><Btn $tone="led" $fs={11.6} $left={9}>Auto Play<Led $c="amber" /></Btn></Row>
            <Row><Btn $tone="led" $fs={11.6} $left={9}>Auto Return<Led $c="amber" /></Btn></Row>
          </Col>
          <Col $w={167} $mt={6} $ml={5} $gap={2}><ClockTop>00:00:00:13</ClockTop><Row $gap={2}><ClockCell $w={85}>INT</ClockCell><ClockCell>FPS 30</ClockCell></Row></Col>
          <Col $w={167} $mt={6} $ml={4} $gap={2}><ClockTop>001|01|1664</ClockTop><Row $gap={2}><ClockCell $w={85}>120.00</ClockCell><ClockCell>4/4</ClockCell></Row></Col>
          <Col $w={30} $mt={4} $ml={5}><Row><Btn $tone="led" $h={64}>
            <svg width="24" height="34"><path d="M9.500 2h5l6.500 29H3L8 6z" fill="#2d2a29" stroke="#fff" strokeWidth="1.600" /><path d="M5 21h14M2.500 4.500l8 16M5 24h14" stroke="#fff" strokeWidth="1.500" /></svg>
          </Btn></Row></Col>
          <SelPanel>
            <Col $w={146}>
              <SelTitle $w={130}>Selection</SelTitle>
              {["Start", "End", "Length"].map((k) => <SelRow key={k}><SelKey>{k}</SelKey><Green>‒‒‒|‒‒|‒‒‒‒</Green></SelRow>)}
            </Col>
            <Col>
              <SelTitle $w={112}>Punch</SelTitle>
              <Row $mt={2}><PunchRow><Btn $tone="punch" $w={28} $fs={12}>In</Btn>00:02:07:17</PunchRow></Row>
              <Row><PunchRow><Btn $tone="punch" $w={28} $fs={12}>Out</Btn>00:04:21:24</PunchRow></Row>
            </Col>
          </SelPanel>
          <Col $w={64} $mt={4} $ml={3} $gap={1.5}>{["solo", "audition", "feedback"].map((t) => <Row key={t}><Btn $tone="warn" $fs={12.2}>{t}</Btn></Row>)}</Col>
          <Chevron ml={6} mt={5} />
        </TransportBar>
        <MainRow>
          <EditorStripCol><MasterStrip close /></EditorStripCol>
          <EditCol>
            <ToolRow>
              <Combo $w={77}>Slide<ComboArrow /></Combo>
              <Row $gap={3} $ml={5}>{modeIcons.map((ic, i) => <ModeBtn key={i} $on={i === 0}><svg width="16" height="18">{ic}</svg></ModeBtn>)}</Row>
              <Chevron ml={6} />
              <Row $gap={2} $ml={14}>
                <Btn $tone="led" $w={30} $h={31}><ZoomIcon k="-" /></Btn><Btn $tone="led" $w={30} $h={31}><ZoomIcon k="+" /></Btn><Btn $tone="led" $w={30} $h={31}><ZoomIcon k="f" /></Btn>
              </Row>
              <Combo $w={108} $ml={3}>Playhead<ComboArrow /></Combo>
              <Btn $w={24} $h={31} $ml={2}><HeightIcon /></Btn><Btn $w={24} $h={31} $ml={2}><HeightIcon plus /></Btn>
              <Chevron ml={5} />
              <Combo $w={103} $ml={15}>No Grid<ComboArrow /></Combo>
              <Combo $w={174} $ml={1}>Beats/20<ComboArrow /></Combo>
              <Combo $w={93} $ml={2}>Mouse<ComboArrow /></Combo>
              <Btn $w={20} $h={31} $ml={14}><svg width="10" height="14"><path d="M8.5 1L2 7l6.500 6" fill="none" stroke="#fff" strokeWidth="1.8" /></svg></Btn>
              <Btn $w={20} $h={31} $ml={2}><svg width="10" height="14"><path d="M1.5 1L8 7l-6.500 6" fill="none" stroke="#fff" strokeWidth="1.8" /></svg></Btn>
              <NudgeClock>00:00:05:00</NudgeClock>
              <Btn $w={24} $h={33} $ml={12}><Speaker /></Btn>
              <Chevron ml={3} />
            </ToolRow>
            <Lower>
              <CanvasCol>
                <Row $h={91}>
                  <RulerLabels>{["Timecode", "Meter", "Tempo", "Loop/Punch Ranges", "CD Markers", "Location Markers"].map((t) => <span key={t}>{t}</span>)}</RulerLabels>
                  <Rulers>
                    <TimeRuler>
                      <TimeLabel $x={2}>00:00:00:00</TimeLabel><TimeLabel $x={272}>00:05:00:00</TimeLabel>
                      <Overlay width="527" height="16">{[1, 2, 3, 4, 6, 7, 8, 9].map((i) => <rect key={i} x={i * 54} y="13" width="1" height="3" fill="#fff" />)}<rect x="270" y="9" width="1" height="7" fill="#fff" /><rect x="0" y="0" width="1" height="16" fill="#fff" /></Overlay>
                    </TimeRuler>
                    <Ruler $c="#60636f"><Flag $x={0} $w={28} $fill="#a3606f" $edge="#ef4258" $pl={5}>4/4</Flag></Ruler>
                    <Ruler $c="#6d6f7e"><Flag $x={0} $w={51} $fill="#a9596a" $edge="#ef4258" $pl={5}>120.00</Flag></Ruler>
                    <Ruler $c="#8b8d96">
                      <Flag $x={114} $w={56} $fill="#86636b" $edge="#a04044" $pl={15}>Punch</Flag><Flag $x={180} $w={56} $fill="#86636b" $edge="#a04044" $pl={3}>Punch</Flag>
                      <Overlay width="527" height="14"><path d="M115 0h13L115 13zM222 0h14v13z" fill="#863a3c" /></Overlay>
                    </Ruler>
                    <Ruler $c="#9294a2"><Flag $x={36} $w={51} $fill="#62b7ab" $edge="#29dfc0" $pl={8}>mark1</Flag><Overlay width="60" height="15"><path d="M35 0h7v6l-3 7-3-7z" fill="#18e0bd" /></Overlay></Ruler>
                    <Ruler $c="#98a0ab"><Flag $x={0} $w={46} $fill="#7a978b" $edge="#4a7f5e" $pl={13}>start</Flag><Overlay width="60" height="15"><path d="M0 1l7 6-7 6z" fill="#4a7f5e" /></Overlay></Ruler>
                    <Overlay width="527" height="524">
                      <path d="M1 16h9L1 26z" fill="#f00" /><path d="M0 32q5 5 0 10z" fill="#f03048" /><path d="M.5 16V524" stroke="#c83038" /><path d="M236.5 16V524" stroke="#0a0ad8" /><path d="M0 513l9 11H0z" fill="#f00" />
                      <path d="M153.5 73v16l3.500-3.500 3 5.500 2-1-2.500-5.500h5z" fill="#0a0a0a" stroke="#fff" strokeWidth="1" />
                    </Overlay>
                  </Rulers>
                </Row>
                <Tracks>
                  <TrackHeads>
                    <TrackHead><Col $w={115}><TrackName>master</TrackName><TrackFader /></Col><TrackGrid><Btn $tone="mute" $h={26}>m</Btn></TrackGrid></TrackHead>
                    <TrackHead>
                      <Col $w={115}><TrackName>Bus 2</TrackName><TrackFader /></Col>
                      <TrackGrid><Btn $tone="mute" $h={26}>m</Btn><Btn $tone="solo" $h={26}>s</Btn><Btn $tone="led" $h={26}>a</Btn><Btn $tone="led" $h={26}>g</Btn></TrackGrid>
                    </TrackHead>
                  </TrackHeads>
                  <TrackCanvas><Lane /></TrackCanvas>
                </Tracks>
                <Row $h={4} />
                <SummaryRow>
                  <Col $w={22}><Row><Btn $h={41}><SmallArrow d="M6.500 2L3.500 5l3 3" /></Btn></Row><Row><Btn $h={40}><SmallArrow d="M3.500 2l3 3-3 3" /></Btn></Row></Col>
                  <Summary><SummaryRed /><SummaryView /><SummaryEnd /></Summary>
                  <Col $w={22}><Row><Btn $h={41}><SmallArrow d="M2 6.500l3-3 3 3" /></Btn></Row><Row><Btn $h={40}><SmallArrow d="M2 3.500l3 3 3-3" /></Btn></Row></Col>
                </SummaryRow>
              </CanvasCol>
              <RouteList />
              <Tabs><Tab $h={62}>Regions</Tab><Tab $h={117} $on>Tracks &amp; Busses</Tab><Tab $h={79}>Snapshots</Tab><Tab $h={100}>Route Groups</Tab><Tab $h={116}>Ranges &amp; Marks</Tab></Tabs>
            </Lower>
          </EditCol>
        </MainRow>
      </EditorBody>
    </Content>
  </Frame>
);

/* ---------- big clock ---------- */
const BigClockFace = styled.div`
  flex: 1; background: #000; color: #f0f0f0; font-size: 278.67px; letter-spacing: 0.8px; line-height: 326px; white-space: nowrap; overflow: hidden; padding-left: 89px;
`;

const ComputerIcon = () => (
  <svg width="48" height="50">
    <rect x=".5" y="1" width="47" height="28" rx="1.5" fill="#e8e8e4" stroke="#a8a8a2" /><rect x="2.5" y="3.5" width="43" height="23" fill="#2c5ca4" stroke="#123468" />
    <path d="M20 4h6l-8 18h-4zM29 4h6L23 22h-3z" fill="#5f86c4" opacity=".6" /><path d="M19 30h11l3 5v2H15v-2z" fill="#e4e4e0" stroke="#8a8a86" strokeWidth=".7" />
    <path d="M4 41h41l1 6H2z" fill="#8b8b88" stroke="#e8e8e6" /><path d="M5 43h38M5 45h38" stroke="#d8d8d5" strokeDasharray="2 1" /><path d="M34 36h13l-10 3v3" fill="none" stroke="#e4e4e0" />
  </svg>
);
const HomeIcon = () => (
  <svg width="46" height="42">
    <path d="M2 38V2q0-1 1-1h14l5 4h20q1 0 1 1v32z" fill="#8c8c78" stroke="#5f5f50" /><path d="M1.5 40L2 13h12l4-4h25.500v31z" fill="#c6c6ae" stroke="#74746a" />
    <path d="M10 25l12-9 12 9M13 25v8h5v-6h7v6h5v-8" fill="none" stroke="#8a8a78" strokeWidth="2" />
  </svg>
);
const TrashIcon = () => (
  <svg width="40" height="46">
    <path d="M3 10l3 31q14 6 28 0l3-31z" fill="#a8acaa" stroke="#5f6462" /><path d="M6 16l3 23q11 4 22 0l3-23z" fill="none" stroke="#e4e6e5" strokeDasharray="1 1.5" strokeWidth="3" />
    <path d="M14 16h12v12H14z" fill="#7c918a" /><ellipse cx="20" cy="8" rx="18" ry="6" fill="#8f9c97" stroke="#e6e8e7" strokeWidth="3" /><ellipse cx="20" cy="8" rx="19.500" ry="7.500" fill="none" stroke="#4a4e4c" strokeWidth=".8" />
  </svg>
);

export default function App() {
  return (
    <>
      <GlobalStyle />
      <Desktop>
        <DesktopItem $top={22}><IconSlot $h={48}><ComputerIcon /></IconSlot>Computer</DesktopItem>
        <DesktopItem $top={105}><IconSlot $h={45}><HomeIcon /></IconSlot>paul's Home</DesktopItem>
        <DesktopItem $top={185}><IconSlot $h={45}><TrashIcon /></IconSlot>Trash</DesktopItem>
        <DesktopItem $top={284}><IconSlot $h={46}><ArdourGlyph size={48} /></IconSlot><span>Ardour-3.0beta1a-<br />dbg</span></DesktopItem>
        <TaskEdge>
          <EdgeBit $w={52} $c="transparent" /><EdgeBit $w={6} $c="#556" /><EdgeBit $w={18} $c="transparent" /><EdgeBit $w={29} $c="#8c6f5c" /><EdgeBit $w={187} $c="transparent" /><EdgeBit $w={28} $c="#46701a" />
          <EdgeBit $w={456} $c="transparent" /><EdgeBit $w={325} $c="#eef0ef" /><EdgeBit $w={99} $c="transparent" /><EdgeBit $w={12} $c="#2c4560" />
        </TaskEdge>
        <Mixer />
        <Editor />
        <Frame x={959} y={485} w={1786} h={356} th={25} title="Big Clock"><BigClockFace>00:00:00:13</BigClockFace></Frame>
      </Desktop>
    </>
  );
}
